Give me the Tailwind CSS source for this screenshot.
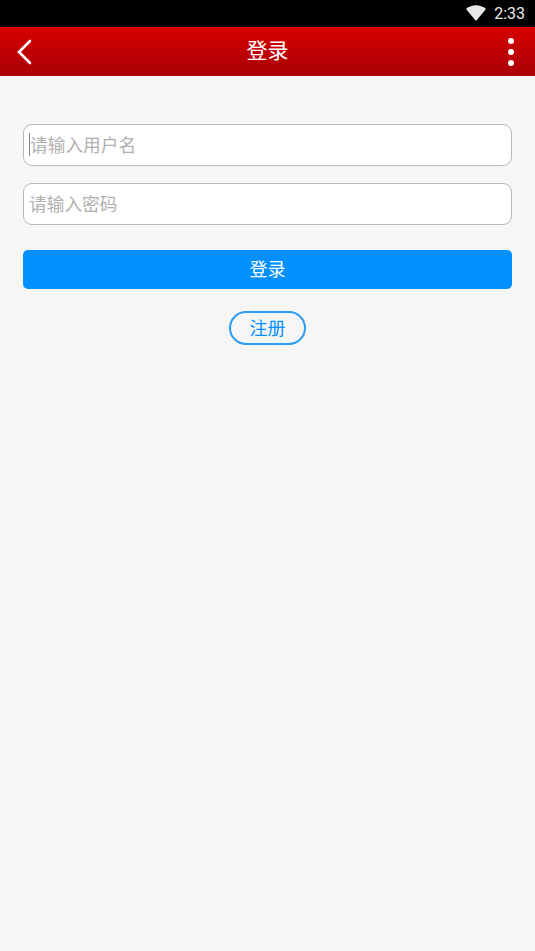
<!DOCTYPE html>
<html lang="zh">
<head>
    <meta charset="UTF-8">
    <meta name="viewport" content="width=device-width, initial-scale=1.0">
    <title>登录</title>
    <script src="https://cdn.jsdelivr.net/npm/@tailwindcss/browser@4"></script>
</head>
<body class="bg-[#f6f6f6] font-['Roboto','Noto_Sans_CJK_SC',sans-serif]">
    <div class="w-[535px] h-[951px] flex flex-col">
        <!-- status bar -->
        <div class="h-[27px] bg-black flex items-center justify-end pr-[10px]">
            <svg class="w-[20px] h-[16px] mr-[8px] -mt-[1px]" viewBox="0 0 20 16"><path d="M0 4 C6 -1 14 -1 20 4 L10 16 Z" fill="#e8e8e8"/></svg>
            <span class="text-[16px] leading-none text-[#e8e8e8]">2:33</span>
        </div>
        <!-- header -->
        <div class="h-[49px] bg-gradient-to-b from-[#d80000] to-[#a80006] flex items-center">
            <div class="flex-1 flex">
                <svg class="w-[16px] h-[26px] ml-[16px]" viewBox="0 0 16 26" fill="none"><path d="M14 2 L3 13 L14 24" stroke="#fff" stroke-width="2.6" stroke-linecap="round"/></svg>
            </div>
            <span class="text-[21px] pt-[1px] text-white">登录</span>
            <div class="flex-1 flex justify-end">
                <div class="flex flex-col gap-[5px] mr-[21px]">
                    <span class="w-[6px] h-[6px] rounded-full bg-white"></span>
                    <span class="w-[6px] h-[6px] rounded-full bg-white"></span>
                    <span class="w-[6px] h-[6px] rounded-full bg-white"></span>
                </div>
            </div>
        </div>
        <!-- form -->
        <div class="flex flex-col px-[23px] pt-[48px]">
            <div class="h-[42px] bg-white border-[1.5px] border-[#b8b8b8] rounded-[9px] flex items-center pl-[6px] pt-[2px] text-[17.7px] text-[#b0b0b0] relative">
                <span class="absolute left-[5px] top-[8px] w-px h-[23px] bg-[#888]"></span>
                请输入用户名
            </div>
            <div class="h-[42px] mt-[17px] bg-white border-[1.5px] border-[#b8b8b8] rounded-[9px] flex items-center pl-[5px] pt-[2px] text-[17.7px] text-[#b0b0b0]">
                请输入密码
            </div>
            <button class="h-[39px] mt-[25px] bg-[#0090ff] rounded-[5px] text-[18px] text-white">登录</button>
            <button class="w-[77px] h-[34px] mt-[22px] mx-auto pt-[1px] border-2 border-[#2a9df4] rounded-full text-[18px] leading-none text-[#0090ff]">注册</button>
        </div>
    </div>
</body>
</html>
